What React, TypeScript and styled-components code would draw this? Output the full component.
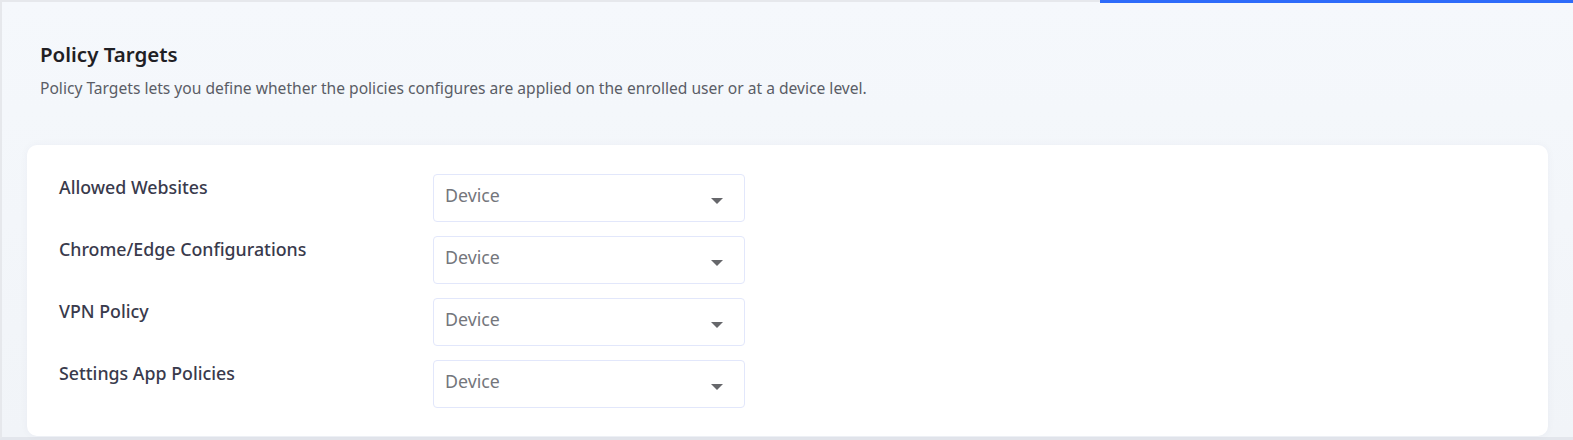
import React from 'react';
import styled, { createGlobalStyle } from 'styled-components';

const GlobalStyle = createGlobalStyle`
  html, body {
    margin: 0;
    padding: 0;
    background: #f5f7fb;
  }
  body {
    font-family: "Noto Sans", "Open Sans", sans-serif;
  }
`;

const Page = styled.div`
  position: relative;
  height: 440px;
  box-sizing: border-box;
  border-top: 2px solid #e6e8ec;
  border-left: 2px solid #e6e8ec;
  border-bottom: 3px solid #e3e6ec;
  background: linear-gradient(180deg, #f5f8fc 0%, #f1f4f8 100%);
  display: flex;
  flex-direction: column;
  padding: 0 25px;
`;

const ActiveBar = styled.div`
  position: absolute;
  top: -2px;
  left: 1098px;
  right: 0;
  height: 3px;
  background: #2d6bfa;
`;

const Header = styled.div`
  padding: 38px 0 0 13px;
  height: 143px;
  box-sizing: border-box;
`;

const Title = styled.h2`
  margin: 0;
  font-size: 20.5px;
  font-weight: 600;
  color: #1f2024;
  line-height: 28px;
`;

const Description = styled.p`
  margin: 9px 0 0;
  font-size: 15.6px;
  color: #5a5d66;
  line-height: 22px;
`;

const Card = styled.div`
  background: #ffffff;
  border-radius: 10px;
  box-shadow: 0 0 8px rgba(20, 40, 90, 0.04);
  padding: 29px 32px 28px;
  display: flex;
  flex-direction: column;
  gap: 14px;
`;

const Row = styled.div`
  display: flex;
  align-items: flex-start;
`;

const Label = styled.div`
  width: 374px;
  font-size: 17.8px;
  font-weight: 500;
  color: #393a4c;
  line-height: 26px;
`;

const Select = styled.div`
  width: 312px;
  height: 48px;
  box-sizing: border-box;
  border: 1px solid #e2e7fb;
  border-radius: 4px;
  display: flex;
  align-items: flex-start;
  justify-content: space-between;
  padding: 6px 21px 0 11px;
`;

const Value = styled.span`
  font-size: 17.8px;
  color: #74767c;
  line-height: 28px;
`;

const Caret = styled.span`
  margin-top: 17px;
  width: 0;
  height: 0;
  border-left: 6px solid transparent;
  border-right: 6px solid transparent;
  border-top: 6px solid #66676b;
`;

const targets = [
  'Allowed Websites',
  'Chrome/Edge Configurations',
  'VPN Policy',
  'Settings App Policies',
];

const App: React.FC = () => {
  return (
    <>
      <GlobalStyle />
      <Page>
        <ActiveBar />
        <Header>
          <Title>Policy Targets</Title>
          <Description>
            Policy Targets lets you define whether the policies configures are applied on the enrolled user or at a device level.
          </Description>
        </Header>
        <Card>
          {targets.map((name) => (
            <Row key={name}>
              <Label>{name}</Label>
              <Select>
                <Value>Device</Value>
                <Caret />
              </Select>
            </Row>
          ))}
        </Card>
      </Page>
    </>
  );
};

export default App;
